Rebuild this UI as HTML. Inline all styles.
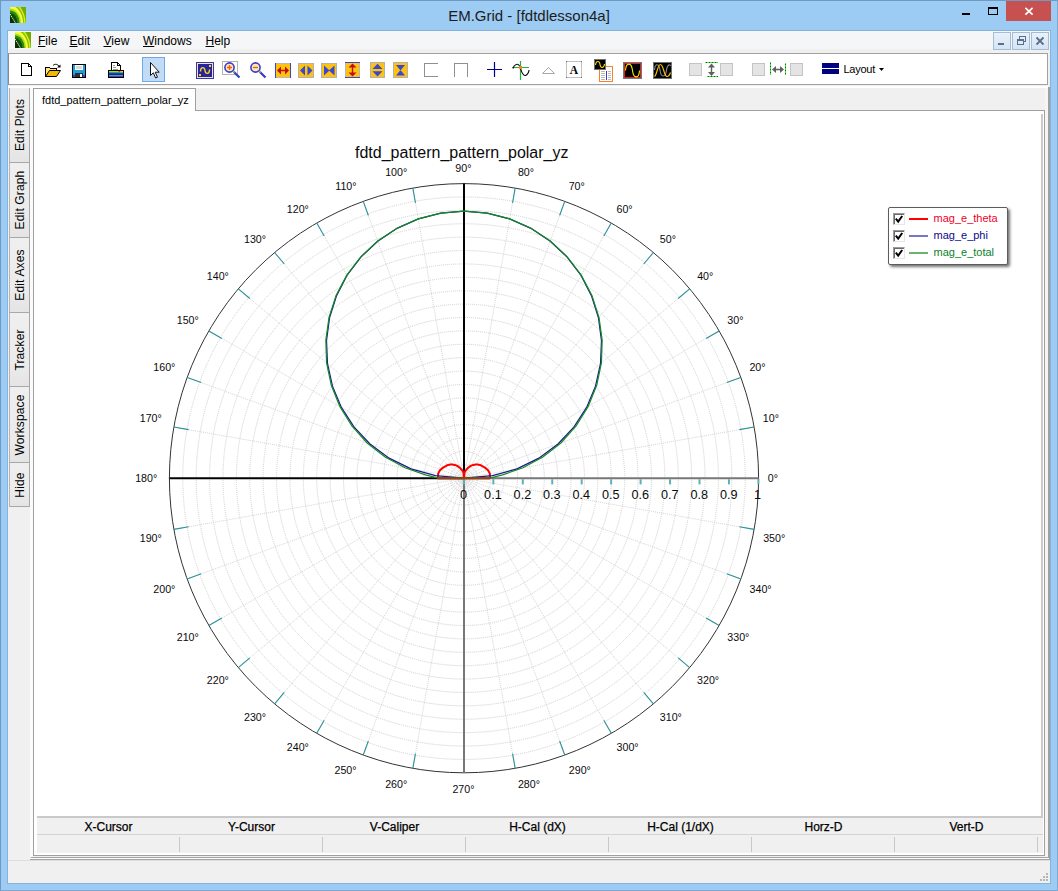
<!DOCTYPE html>
<html lang="en"><head><meta charset="utf-8"><title>EM.Grid - [fdtdlesson4a]</title>
<style>
html,body{margin:0;padding:0;}
body{width:1058px;height:891px;position:relative;overflow:hidden;background:#9ccbf3;font-family:"Liberation Sans",Arial,sans-serif;font-size:12px;color:#000;}
.abs{position:absolute;}
.frame{position:absolute;left:0;top:0;width:1058px;height:891px;box-sizing:border-box;border:1px solid #6f98c2;border-right-color:#7fa7cf;border-bottom-color:#7fa7cf;}
.inner{position:absolute;left:7px;top:30px;width:1044px;height:854px;box-sizing:border-box;border:1px solid #86b2dc;}
.title{position:absolute;left:0;top:5.500px;width:1058px;text-align:center;font-size:15px;line-height:20px;color:#1c1c1c;white-space:nowrap;}
.client{position:absolute;left:8px;top:31px;width:1042px;height:852px;background:#f0f0f0;overflow:hidden;}
.menubar{position:absolute;left:0;top:0;width:1042px;height:18px;background:#f5f6f7;}
.menubar span.m{position:absolute;top:2px;font-size:12px;line-height:16px;white-space:nowrap;}
.menubar u{text-decoration:underline;text-underline-offset:1px;}
.mdibtn{position:absolute;top:1px;width:18px;height:18px;box-sizing:border-box;border:1px solid #a6bbd4;background:linear-gradient(#e9f1fa,#d5e4f5);}
.toolbar{position:absolute;left:0;top:22px;width:1040px;height:32px;box-sizing:border-box;background:#fff;border:1px solid #a0a0a0;border-left-color:#8a8a8a;}
.sidetab{position:absolute;left:1px;width:21px;box-sizing:border-box;background:linear-gradient(#efefef,#ebebeb 70%,#e4e4e4);border-top:1px solid #a8a8a8;border-right:1px solid #a8a8a8;border-left:1px solid #b4b4b4;}
.sidetab span{position:absolute;left:50%;top:50%;transform:translate(-50%,-50%) rotate(-90deg);white-space:nowrap;font-size:12px;letter-spacing:0.140px;}
.page{position:absolute;left:25px;top:79px;width:1012px;height:746px;box-sizing:border-box;background:#fff;border:1px solid #a0a0a0;}
.tab{position:absolute;left:25px;top:57px;width:163px;height:23px;box-sizing:border-box;background:#fff;border:1px solid #a0a0a0;border-bottom:none;}
.tab span{position:absolute;left:8px;top:4px;font-size:11px;line-height:14px;white-space:nowrap;}
.stat{position:absolute;left:29px;top:785px;width:1006px;height:37px;background:#f0f0f0;}
.stat .top{position:absolute;left:0;top:0;width:100%;height:2px;background:#c9c9c9;}
.stat .mid{position:absolute;left:0;top:18px;width:100%;height:1px;background:#d4d4d4;}
.stat .h{position:absolute;top:4px;-webkit-text-stroke:0.250px #000;width:143px;text-align:center;font-size:12px;line-height:15px;}
.stat .v{position:absolute;top:21px;width:1px;height:15px;background:#c8c8c8;}
svg.plot{position:absolute;left:0;top:0;}
.legend{position:absolute;left:888px;top:207px;width:120px;height:58px;box-sizing:border-box;border:1.500px solid #5c5c5c;border-radius:2px;background:#fff;box-shadow:2px 2px 3px rgba(0,0,0,.55);}
.legend .cb{position:absolute;left:3.500px;width:12px;height:12px;box-sizing:border-box;border:1px solid #9a9a9a;border-right-color:#e6e6e6;border-bottom-color:#e6e6e6;background:#fff;box-shadow:inset 1px 1px 0 #6a6a6a;}
.legend .cb svg{position:absolute;left:0;top:0;}
.legend .ln{position:absolute;left:19.500px;width:19px;}
.legend .tx{position:absolute;left:44.500px;font-size:11px;line-height:13px;white-space:nowrap;}

</style></head>
<body>
<div class="frame"></div>
<div class="inner"></div>
<div class="title">EM.Grid - [fdtdlesson4a]</div>
<svg class="abs" style="left:10px;top:7px" width="16" height="16" viewBox="0 0 16 16"><use href="#logo"/></svg>
<div class="abs" style="left:962px;top:13px;width:8px;height:2px;background:#000"></div>
<div class="abs" style="left:988px;top:7px;width:10px;height:8px;box-sizing:border-box;border:1px solid #000;border-top-width:2px"></div>
<div class="abs" style="left:1006px;top:1px;width:45px;height:20px;background:#c75050"></div>
<svg class="abs" style="left:1024px;top:6px" width="10" height="10" viewBox="0 0 10 10"><path d="M1.400 1.900L8.600 8.700M8.600 1.900L1.400 8.700" stroke="#fff" stroke-width="1.700" fill="none"/></svg>
<div class="client">
 <div class="menubar">
  <svg class="abs" style="left:7px;top:1px" width="16" height="16" viewBox="0 0 16 16">
   <defs><g id="logo"><clipPath id="lc"><rect width="16" height="16"/></clipPath><g clip-path="url(#lc)">
    <rect width="16" height="16" fill="#74ac00"/>
    <ellipse cx="0" cy="16" rx="15.500" ry="21" fill="#d8f030"/>
    <ellipse cx="0" cy="16" rx="14.300" ry="19.500" fill="#8cc400"/>
    <ellipse cx="0" cy="16" rx="13" ry="17.500" fill="#f6ff48"/>
    <ellipse cx="0" cy="16" rx="11" ry="14.600" fill="#b4e000"/>
    <ellipse cx="0" cy="16" rx="9.600" ry="12.600" fill="#2a8a14"/>
    <ellipse cx="0" cy="16" rx="7.500" ry="10" fill="#0e4a08"/>
    <ellipse cx="0" cy="16" rx="4" ry="6" fill="#0a3004"/>
    <path d="M0 7L5.500 16" stroke="#f0f4e0" stroke-width="1" stroke-dasharray="1.500 1"/>
   </g></g></defs><use href="#logo"/></svg>
  <span class="m" style="left:30px"><u>F</u>ile</span>
  <span class="m" style="left:61.500px"><u>E</u>dit</span>
  <span class="m" style="left:95.500px"><u>V</u>iew</span>
  <span class="m" style="left:135px"><u>W</u>indows</span>
  <span class="m" style="left:197.500px"><u>H</u>elp</span>
  <div class="mdibtn" style="left:985px"></div>
  <div class="mdibtn" style="left:1004px"></div>
  <div class="mdibtn" style="left:1023px"></div>
 </div>
 <div class="toolbar"></div>
 <div class="sidetab" style="top:56px;height:75px"><span>Edit Plots</span></div>
 <div class="sidetab" style="top:131px;height:75px"><span>Edit Graph</span></div>
 <div class="sidetab" style="top:206px;height:75px"><span>Edit Axes</span></div>
 <div class="sidetab" style="top:281px;height:75px"><span>Tracker</span></div>
 <div class="sidetab" style="top:355px;height:76px"><span>Workspace</span></div>
 <div class="sidetab" style="top:431px;height:45px;border-bottom:1px solid #a8a8a8"><span>Hide</span></div>
 <div class="abs" style="left:0;top:55px;width:1040px;height:2px;background:#fff"></div>
 <div class="abs" style="left:22px;top:57px;width:3px;height:769px;background:#fbfbfb"></div>
 <div class="abs" style="left:1037px;top:57px;width:3px;height:769px;background:#f5f5f5"></div>
 <div class="abs" style="left:1040px;top:56px;width:2px;height:773px;background:#a0a0a0"></div>
 <div class="abs" style="left:23px;top:826px;width:1019px;height:1px;background:#a4a4a4"></div>
 <div class="abs" style="left:22px;top:827px;width:1019px;height:1px;background:#fbfbfb"></div>
 <div class="abs" style="left:22px;top:828px;width:1020px;height:1px;background:#a4a4a4"></div>
 <div class="abs" style="left:0;top:829px;width:1042px;height:1px;background:#dedede"></div>
 <div class="page"></div>
 <div class="abs" style="left:1033px;top:83px;width:2px;height:704px;background:#cbcbcb"></div>
 <div class="tab"><span>fdtd_pattern_pattern_polar_yz</span></div>
 <div class="stat"><div class="top"></div><div class="mid"></div>
  <div class="h" style="left:0">X-Cursor</div>
  <div class="h" style="left:143px">Y-Cursor</div>
  <div class="h" style="left:286px">V-Caliper</div>
  <div class="h" style="left:429px">H-Cal (dX)</div>
  <div class="h" style="left:572px">H-Cal (1/dX)</div>
  <div class="h" style="left:715px">Horz-D</div>
  <div class="h" style="left:858px">Vert-D</div>
  <div class="v" style="left:142px"></div><div class="v" style="left:285px"></div><div class="v" style="left:428px"></div><div class="v" style="left:571px"></div><div class="v" style="left:714px"></div><div class="v" style="left:857px"></div><div class="v" style="left:1000px"></div>
 </div>
</div>
<svg class="abs" style="left:1040px;top:873px" width="8" height="8" viewBox="0 0 8 8" shape-rendering="crispEdges"><g fill="#b6b6b6"><rect x="6" y="0" width="2" height="2"/><rect x="3" y="3" width="2" height="2"/><rect x="6" y="3" width="2" height="2"/><rect x="0" y="6" width="2" height="2"/><rect x="3" y="6" width="2" height="2"/><rect x="6" y="6" width="2" height="2"/></g></svg>
<svg class="abs" style="left:0;top:0" width="1058" height="120" viewBox="0 0 1058 120">
<!-- new -->
<g shape-rendering="crispEdges">
<path d="M21.5 63.5H28.5L31.5 66.5V75.5H21.5Z" fill="#fff" stroke="#000" stroke-width="1"/>
<path d="M28.5 63.5V66.5H31.5" fill="none" stroke="#000" stroke-width="1"/>
</g>
<!-- open -->
<g>
<path d="M45.5 76.5V67.5H49.5L50.5 68.5H56.5V71" fill="#ffe680" stroke="#000" stroke-width="1" shape-rendering="crispEdges"/>
<path d="M45.5 76.5L49.5 70.5H60.5L56.5 76.5Z" fill="#f5b800" stroke="#000" stroke-width="1"/>
<path d="M53 65.5C55 63.5 58 64 59.5 67" fill="none" stroke="#000" stroke-width="1"/>
<path d="M57 67.5H60.5V64.5Z" fill="#000"/>
</g>
<!-- save -->
<g shape-rendering="crispEdges">
<rect x="72.5" y="64.5" width="13" height="13" fill="#1ba1e2" stroke="#000"/>
<rect x="75" y="65" width="8" height="5" fill="#fff"/>
<rect x="76" y="66" width="6" height="3" fill="#d8d8d8"/>
<rect x="75" y="73" width="8" height="4" fill="#303030"/>
<rect x="80" y="74" width="2" height="3" fill="#fff"/>
<rect x="73" y="75" width="2" height="2" fill="#4040c0"/><rect x="83" y="75" width="2" height="2" fill="#4040c0"/>
</g>
<!-- print -->
<g shape-rendering="crispEdges">
<path d="M111.5 70.5V62.5H117.5L120.5 65.5V70.5" fill="#fff" stroke="#000"/>
<path d="M117.5 62.5V65.5H120.5" fill="none" stroke="#000"/>
<rect x="113" y="65" width="2" height="1" fill="#999"/><rect x="113" y="67" width="3" height="1" fill="#999"/><rect x="113" y="68.6" width="5" height="1" fill="#999"/>
<rect x="108.500" y="70.500" width="15" height="7" rx="1" fill="#16248c" stroke="#000"/>
</g>
<g><rect x="109" y="71" width="14" height="1.500" fill="#a4e400"/><rect x="118.500" y="71" width="2" height="1.500" fill="#e83820"/><rect x="120.500" y="71" width="2.500" height="1.500" fill="#ffd000"/>
<rect x="109" y="72.500" width="14" height="1" fill="#00b4e4"/>
<rect x="109" y="73.500" width="14" height="1.500" fill="#142a8c"/>
<rect x="109" y="75" width="14" height="1.400" fill="#6c8cc8"/>
</g>
<!-- select -->
<rect x="142.500" y="57.500" width="22" height="24" fill="#c2dcf8" stroke="#6fa8e6"/>
<path d="M150.500 62.500V75.500L153.300 72.800L155.600 78L157.500 77.200L155.200 72.200H159.200Z" fill="#fff" stroke="#111" stroke-width="1"/>
<!-- scope -->
<g shape-rendering="crispEdges">
<rect x="196.500" y="62.500" width="17" height="16" fill="#f5e6a8" stroke="#3434c8"/>
<rect x="198" y="64" width="14" height="13" fill="#26269c"/>
<rect x="209" y="65" width="2" height="2" fill="#ffd020"/><rect x="199" y="74" width="2" height="2" fill="#ffd020"/>
</g>
<path d="M200.500 71.500C200.500 66.500 204.500 66.500 205 70.500C205.500 74.500 209.500 74.500 209.500 69.500" fill="none" stroke="#ffd020" stroke-width="1.400"/>
<!-- zoom in -->
<rect x="222.500" y="61.500" width="15" height="13" fill="none" stroke="#b4b4b4" shape-rendering="crispEdges"/>
<path d="M233.500 71.500L239.500 77.500" stroke="#3a3ac4" stroke-width="2.200"/>
<path d="M233 71L234.500 72.500" stroke="#a8d820" stroke-width="1.600"/>
<circle cx="229.500" cy="67.500" r="4.600" fill="#f6eab8" stroke="#3c3cd0" stroke-width="1.600"/>
<path d="M227 67.500H232M229.500 65V70" stroke="#ff5a00" stroke-width="1.300" fill="none"/>
<!-- zoom out -->
<path d="M259.500 71.500L265.500 77.500" stroke="#3a3ac4" stroke-width="2.200"/>
<path d="M259 71L260.500 72.500" stroke="#a8d820" stroke-width="1.600"/>
<circle cx="255.500" cy="67.500" r="4.600" fill="#f6eab8" stroke="#3c3cd0" stroke-width="1.600"/>
<path d="M253 67.500H258" stroke="#ff5a00" stroke-width="1.300" fill="none"/>
<!-- D: horizontal red arrows -->
<g>
<rect x="275" y="63" width="16" height="15" fill="#ffc20e"/>
<rect x="275" y="63" width="16" height="1" fill="#b4b4c4"/><rect x="275" y="77" width="16" height="1" fill="#b4b4c4"/>
<rect x="275" y="63" width="1" height="15" fill="#3444dc"/><rect x="290" y="63" width="1" height="15" fill="#3444dc"/>
<path d="M277 70.500L281 66.500V69.800H285V66.500L289 70.500L285 74.500V71.200H281V74.500Z" fill="#c01010"/>
</g>
<!-- E -->
<g>
<rect x="298.500" y="63.500" width="15" height="14" fill="#ffc20e" stroke="#b0b0b8"/>
<path d="M300 70.500L305 65.500V75.500Z M312.500 70.500L307.500 65.500V75.500Z" fill="#3a48d0"/>
</g>
<!-- F -->
<g>
<rect x="321.500" y="63.500" width="15" height="14" fill="#ffc20e" stroke="#b0b0b8"/>
<path d="M324 65.500L329.500 70.500L324 75.500Z M334.500 65.500L329 70.500L334.500 75.500Z" fill="#3a48d0"/>
</g>
<!-- G vertical red -->
<g>
<rect x="345" y="62" width="15" height="16" fill="#ffc20e"/>
<rect x="345" y="62" width="1" height="16" fill="#b4b4c4"/><rect x="359" y="62" width="1" height="16" fill="#b4b4c4"/>
<rect x="345" y="62" width="15" height="1" fill="#3444dc"/><rect x="345" y="77" width="15" height="1" fill="#3444dc"/>
<path d="M352.500 63.500L356.500 67.500H353.200V72.500H356.500L352.500 76.500L348.500 72.500H351.800V67.500H348.500Z" fill="#c01010"/>
</g>
<!-- H -->
<g>
<rect x="370.500" y="62.500" width="14" height="15" fill="#ffc20e" stroke="#b0b0b8"/>
<path d="M377.500 63.800L382.500 69H372.500Z M377.500 76.400L382.500 71.200H372.500Z" fill="#3a48d0"/>
</g>
<!-- I -->
<g>
<rect x="393.500" y="62.500" width="14" height="15" fill="#ffc20e" stroke="#b0b0b8"/>
<path d="M396 65H405L400.500 70.500Z M396 75.500H405L400.500 70Z" fill="#3a48d0"/>
</g>
<!-- J K -->
<g shape-rendering="crispEdges" fill="none" stroke="#909090">
<path d="M438 63.500H424.500V76.500H438"/>
<path d="M454.500 77V63.500H467.500V77"/>
</g>
<!-- plus -->
<path d="M487 69.500H502M494.500 62V77" stroke="#00008c" stroke-width="1.200" fill="none"/>
<!-- tracker -->
<path d="M512 67.500H529M520.500 61V80" stroke="#22b14c" stroke-width="1.200" fill="none"/>
<path d="M513 68.500C514 65 517.500 62.500 519.500 66C521 69 522 76 525.500 75.500C527.500 75 529 72 529 70" stroke="#000" stroke-width="1.100" fill="none"/>
<rect x="519" y="66" width="3" height="3" fill="#ff7f27"/>
<!-- triangle -->
<path d="M548.500 67.500L542.500 73.500H554.500Z" fill="#fff" stroke="#a8a8a8" stroke-width="1"/>
<!-- A -->
<rect x="566.500" y="61.500" width="15" height="16" fill="#fff" stroke="#c0c0c0" shape-rendering="crispEdges"/>
<g fill="#707070"><rect x="566" y="61" width="1" height="1"/><rect x="581" y="61" width="1" height="1"/><rect x="566" y="77" width="1" height="1"/><rect x="581" y="77" width="1" height="1"/></g>
<text x="574" y="74" font-family="Liberation Serif, serif" font-weight="bold" font-size="11.500" text-anchor="middle" fill="#000">A</text>
<!-- scope+doc -->
<rect x="599.500" y="66.500" width="13" height="15" fill="#fff" stroke="#ff7f27" shape-rendering="crispEdges"/>
<g fill="#b8b8b8" shape-rendering="crispEdges"><rect x="601" y="71" width="4" height="1"/><rect x="601" y="73" width="4" height="1"/><rect x="601" y="75" width="4" height="1"/><rect x="601" y="77" width="4" height="1"/><rect x="601" y="79" width="4" height="1"/>
<rect x="608" y="71" width="3" height="1"/><rect x="608" y="73" width="3" height="1"/><rect x="608" y="75" width="3" height="1"/><rect x="608" y="77" width="3" height="1"/><rect x="608" y="79" width="3" height="1"/></g>
<rect x="606" y="71" width="1" height="9" fill="#3a3ad0"/>
<rect x="594.500" y="59.500" width="11" height="10" fill="#000" stroke="#707070" shape-rendering="crispEdges"/>
<path d="M595.500 65C596 60.500 599.500 60.500 600 64.500C600.500 68.500 604 68.500 604.500 64" fill="none" stroke="#ffd800" stroke-width="1.100"/>
<!-- red scope -->
<rect x="623.500" y="62.500" width="18" height="16" fill="#e02020" stroke="#707880" shape-rendering="crispEdges"/>
<rect x="625" y="64" width="15" height="13" fill="#000" shape-rendering="crispEdges"/>
<path d="M625.500 70.500C626 62 631.500 62 632.500 70.500C633.500 79 639 79 639.500 70.500" fill="none" stroke="#ffee00" stroke-width="1.100"/>
<!-- gray scope -->
<rect x="653.500" y="62.500" width="18" height="16" fill="#000" stroke="#707070" shape-rendering="crispEdges"/>
<path d="M654.500 70C655 63 659 63 660 70C661 78 665.500 78 666.500 70C667.500 64 670 64 670.500 66" fill="none" stroke="#8a8a8a" stroke-width="1.100"/>
<path d="M654.500 76.500C657 75 657.500 64.500 660.500 64.500C663.500 64.500 664 76.500 667 76.500C669 76.500 670 74 670.500 72.500" fill="none" stroke="#ffc000" stroke-width="1.150"/>
<!-- disabled set -->
<g shape-rendering="crispEdges" fill="#e4e4e4" stroke="#c4c4c4">
<rect x="689.500" y="63.500" width="12" height="12"/><rect x="720.500" y="63.500" width="12" height="12"/>
<rect x="752.500" y="63.500" width="12" height="12"/><rect x="790.500" y="63.500" width="12" height="12"/>
</g>
<path d="M705 62.500H718M707 76.500H718" stroke="#38e838" stroke-width="1" shape-rendering="crispEdges"/><path d="M706 62.500H718M708 76.500H718" stroke="#1c5c1c" stroke-width="1" stroke-dasharray="1 2" shape-rendering="crispEdges"/>
<path d="M711.500 63.500L715 67.500H712.200V72H715L711.500 76L708 72H710.800V67.500H708Z" fill="#606060"/>
<path d="M770.500 62V75M785.500 63V75" stroke="#38e838" stroke-width="1" shape-rendering="crispEdges"/><path d="M770.500 63V75M785.500 64V75" stroke="#1c5c1c" stroke-width="1" stroke-dasharray="1 2" shape-rendering="crispEdges"/>
<path d="M772 69.500L776 66V68.800H780V66L784 69.500L780 73V70.200H776V73Z" fill="#606060"/>
<!-- layout -->
<g shape-rendering="crispEdges" fill="#000080"><rect x="822" y="63" width="17" height="5"/><rect x="822" y="69" width="17" height="5"/></g>
<text x="843.500" y="72.500" font-family="Liberation Sans, Arial, sans-serif" font-size="11" letter-spacing="-0.250" fill="#000">Layout</text>
<path d="M879 68H884L881.500 71Z" fill="#000"/>
<!-- MDI buttons glyphs -->
<rect x="998" y="43" width="6" height="2" fill="#5a6f8c"/>
<g fill="none" stroke="#5a6f8c" stroke-width="1" shape-rendering="crispEdges"><path d="M1019.500 38.500V36.500H1025.500V41.500H1023.500"/><rect x="1017.500" y="39.500" width="6" height="5" fill="#dfeaf7"/><path d="M1017.500 40.500H1023.500"/></g>
<path d="M1036.500 37.500L1043.500 44.500M1043.500 37.500L1036.500 44.500" stroke="#5a6f8c" stroke-width="1.800" fill="none"/>
</svg>

<svg class="plot" width="1058" height="891" viewBox="0 0 1058 891">
<g fill="none" stroke="#cecece" stroke-width="1" stroke-dasharray="1 1">
<circle cx="464.00" cy="478.20" r="13.39"/>
<circle cx="464.00" cy="478.20" r="26.78"/>
<circle cx="464.00" cy="478.20" r="40.17"/>
<circle cx="464.00" cy="478.20" r="53.56"/>
<circle cx="464.00" cy="478.20" r="66.95"/>
<circle cx="464.00" cy="478.20" r="80.35"/>
<circle cx="464.00" cy="478.20" r="93.74"/>
<circle cx="464.00" cy="478.20" r="107.13"/>
<circle cx="464.00" cy="478.20" r="120.52"/>
<circle cx="464.00" cy="478.20" r="133.91"/>
<circle cx="464.00" cy="478.20" r="147.30"/>
<circle cx="464.00" cy="478.20" r="160.69"/>
<circle cx="464.00" cy="478.20" r="174.08"/>
<circle cx="464.00" cy="478.20" r="187.47"/>
<circle cx="464.00" cy="478.20" r="200.86"/>
<circle cx="464.00" cy="478.20" r="214.25"/>
<circle cx="464.00" cy="478.20" r="227.65"/>
<circle cx="464.00" cy="478.20" r="241.04"/>
<circle cx="464.00" cy="478.20" r="254.43"/>
<circle cx="464.00" cy="478.20" r="267.82"/>
<circle cx="464.00" cy="478.20" r="281.21"/>
<circle cx="464.00" cy="478.20" r="3.00"/>
<circle cx="464.00" cy="478.20" r="6.00"/>
<circle cx="464.00" cy="478.20" r="9.00"/>
</g>
<g fill="none" stroke="#d4d4d4" stroke-width="1" stroke-dasharray="1 1">
<line x1="464.00" y1="478.20" x2="754.12" y2="427.04"/>
<line x1="464.00" y1="478.20" x2="740.83" y2="377.44"/>
<line x1="464.00" y1="478.20" x2="719.13" y2="330.90"/>
<line x1="464.00" y1="478.20" x2="689.68" y2="288.83"/>
<line x1="464.00" y1="478.20" x2="653.37" y2="252.52"/>
<line x1="464.00" y1="478.20" x2="611.30" y2="223.07"/>
<line x1="464.00" y1="478.20" x2="564.76" y2="201.37"/>
<line x1="464.00" y1="478.20" x2="515.16" y2="188.08"/>
<line x1="464.00" y1="478.20" x2="412.84" y2="188.08"/>
<line x1="464.00" y1="478.20" x2="363.24" y2="201.37"/>
<line x1="464.00" y1="478.20" x2="316.70" y2="223.07"/>
<line x1="464.00" y1="478.20" x2="274.63" y2="252.52"/>
<line x1="464.00" y1="478.20" x2="238.32" y2="288.83"/>
<line x1="464.00" y1="478.20" x2="208.87" y2="330.90"/>
<line x1="464.00" y1="478.20" x2="187.17" y2="377.44"/>
<line x1="464.00" y1="478.20" x2="173.88" y2="427.04"/>
<line x1="464.00" y1="478.20" x2="173.88" y2="529.36"/>
<line x1="464.00" y1="478.20" x2="187.17" y2="578.96"/>
<line x1="464.00" y1="478.20" x2="208.87" y2="625.50"/>
<line x1="464.00" y1="478.20" x2="238.32" y2="667.57"/>
<line x1="464.00" y1="478.20" x2="274.63" y2="703.88"/>
<line x1="464.00" y1="478.20" x2="316.70" y2="733.33"/>
<line x1="464.00" y1="478.20" x2="363.24" y2="755.03"/>
<line x1="464.00" y1="478.20" x2="412.84" y2="768.32"/>
<line x1="464.00" y1="478.20" x2="515.16" y2="768.32"/>
<line x1="464.00" y1="478.20" x2="564.76" y2="755.03"/>
<line x1="464.00" y1="478.20" x2="611.30" y2="733.33"/>
<line x1="464.00" y1="478.20" x2="653.37" y2="703.88"/>
<line x1="464.00" y1="478.20" x2="689.68" y2="667.57"/>
<line x1="464.00" y1="478.20" x2="719.13" y2="625.50"/>
<line x1="464.00" y1="478.20" x2="740.83" y2="578.96"/>
<line x1="464.00" y1="478.20" x2="754.12" y2="529.36"/>
</g>
<circle cx="464.00" cy="478.20" r="294.60" fill="none" stroke="#333" stroke-width="1"/>
<g stroke="#2a9298" stroke-width="1.100">
<line x1="754.12" y1="427.04" x2="739.35" y2="429.65"/>
<line x1="740.83" y1="377.44" x2="726.74" y2="382.57"/>
<line x1="719.13" y1="330.90" x2="706.14" y2="338.40"/>
<line x1="689.68" y1="288.83" x2="678.19" y2="298.48"/>
<line x1="653.37" y1="252.52" x2="643.72" y2="264.01"/>
<line x1="611.30" y1="223.07" x2="603.80" y2="236.06"/>
<line x1="564.76" y1="201.37" x2="559.63" y2="215.46"/>
<line x1="515.16" y1="188.08" x2="512.55" y2="202.85"/>
<line x1="412.84" y1="188.08" x2="415.45" y2="202.85"/>
<line x1="363.24" y1="201.37" x2="368.37" y2="215.46"/>
<line x1="316.70" y1="223.07" x2="324.20" y2="236.06"/>
<line x1="274.63" y1="252.52" x2="284.28" y2="264.01"/>
<line x1="238.32" y1="288.83" x2="249.81" y2="298.48"/>
<line x1="208.87" y1="330.90" x2="221.86" y2="338.40"/>
<line x1="187.17" y1="377.44" x2="201.26" y2="382.57"/>
<line x1="173.88" y1="427.04" x2="188.65" y2="429.65"/>
<line x1="173.88" y1="529.36" x2="188.65" y2="526.75"/>
<line x1="187.17" y1="578.96" x2="201.26" y2="573.83"/>
<line x1="208.87" y1="625.50" x2="221.86" y2="618.00"/>
<line x1="238.32" y1="667.57" x2="249.81" y2="657.92"/>
<line x1="274.63" y1="703.88" x2="284.28" y2="692.39"/>
<line x1="316.70" y1="733.33" x2="324.20" y2="720.34"/>
<line x1="363.24" y1="755.03" x2="368.37" y2="740.94"/>
<line x1="412.84" y1="768.32" x2="415.45" y2="753.55"/>
<line x1="515.16" y1="768.32" x2="512.55" y2="753.55"/>
<line x1="564.76" y1="755.03" x2="559.63" y2="740.94"/>
<line x1="611.30" y1="733.33" x2="603.80" y2="720.34"/>
<line x1="653.37" y1="703.88" x2="643.72" y2="692.39"/>
<line x1="689.68" y1="667.57" x2="678.19" y2="657.92"/>
<line x1="719.13" y1="625.50" x2="706.14" y2="618.00"/>
<line x1="740.83" y1="578.96" x2="726.74" y2="573.83"/>
<line x1="754.12" y1="529.36" x2="739.35" y2="526.75"/>
</g>
<g stroke-width="2">
<line x1="464.00" y1="478.20" x2="758.60" y2="478.20" stroke="#777"/>
<line x1="464.00" y1="478.20" x2="464.00" y2="772.80" stroke="#777"/>
<line x1="169.40" y1="478.20" x2="464.00" y2="478.20" stroke="#000"/>
<line x1="464.00" y1="183.60" x2="464.00" y2="479.20" stroke="#000"/>
</g>
<g stroke="#5fb0b4" stroke-width="2">
<line x1="463.90" y1="479.20" x2="463.90" y2="484.40"/>
<line x1="493.35" y1="479.20" x2="493.35" y2="484.40"/>
<line x1="522.80" y1="479.20" x2="522.80" y2="484.40"/>
<line x1="552.25" y1="479.20" x2="552.25" y2="484.40"/>
<line x1="581.70" y1="479.20" x2="581.70" y2="484.40"/>
<line x1="611.15" y1="479.20" x2="611.15" y2="484.40"/>
<line x1="640.60" y1="479.20" x2="640.60" y2="484.40"/>
<line x1="670.05" y1="479.20" x2="670.05" y2="484.40"/>
<line x1="699.50" y1="479.20" x2="699.50" y2="484.40"/>
<line x1="728.95" y1="479.20" x2="728.95" y2="484.40"/>
<line x1="758.40" y1="479.20" x2="758.40" y2="484.40"/>
</g>
<polyline points="489.81,478.20 489.93,475.93 489.86,473.64 488.75,471.57 487.48,469.65 485.62,468.12 483.67,466.84 481.76,465.76 479.82,464.93 477.66,464.54 475.57,464.42 473.31,464.91 471.23,465.68 469.27,466.89 467.59,468.33 466.26,469.75 465.21,471.31 464.49,472.62 464.00,478.20 463.51,472.62 462.79,471.31 461.74,469.75 460.41,468.33 458.73,466.89 456.77,465.68 454.69,464.91 452.43,464.42 450.34,464.54 448.18,464.93 446.24,465.76 444.33,466.84 442.38,468.12 440.52,469.65 439.25,471.57 438.14,473.64 438.07,475.93 438.19,478.20 464.00,478.20 464.00,478.20 464.00,478.20 464.00,478.20 464.00,478.20 464.00,478.20 464.00,478.20 464.00,478.20 464.00,478.20 464.00,478.20 464.00,478.20 464.00,478.20 464.00,478.20 464.00,478.20 464.00,478.20 464.00,478.20 464.00,478.20 464.00,478.20 464.00,478.20 464.00,478.20 464.00,478.20 464.00,478.20 464.00,478.20 464.00,478.20 464.00,478.20 464.00,478.20 464.00,478.20 464.00,478.20 464.00,478.20 464.00,478.20 464.00,478.20 464.00,478.20 464.00,478.20 464.00,478.20 464.00,478.20 489.81,478.20" fill="none" stroke="#ff0000" stroke-width="2" stroke-linejoin="round"/>
<polyline points="464.00,478.20 492.52,475.70 516.98,468.86 538.87,458.14 558.00,443.99 574.02,426.89 586.62,407.41 595.51,386.12 600.49,363.67 601.48,340.72 598.47,317.94 591.58,295.99 581.03,275.51 567.12,257.07 550.26,241.21 530.94,228.37 509.71,218.94 487.19,213.17 464.00,211.22 440.81,213.17 418.29,218.94 397.06,228.37 377.74,241.21 360.88,257.07 346.97,275.51 336.42,295.99 329.53,317.94 326.52,340.72 327.51,363.67 332.49,386.12 341.38,407.41 353.98,426.89 370.00,443.99 389.13,458.14 411.02,468.86 435.48,475.70 464.00,478.20 464.00,478.20 464.00,478.20 464.00,478.20 464.00,478.20 464.00,478.20 464.00,478.20 464.00,478.20 464.00,478.20 464.00,478.20 464.00,478.20 464.00,478.20 464.00,478.20 464.00,478.20 464.00,478.20 464.00,478.20 464.00,478.20 464.00,478.20 464.00,478.20 464.00,478.20 464.00,478.20 464.00,478.20 464.00,478.20 464.00,478.20 464.00,478.20 464.00,478.20 464.00,478.20 464.00,478.20 464.00,478.20 464.00,478.20 464.00,478.20 464.00,478.20 464.00,478.20 464.00,478.20 464.00,478.20 464.00,478.20 464.00,478.20" fill="none" stroke="#1a1a8c" stroke-width="1.2"/>
<polyline points="489.81,478.20 502.55,474.83 522.95,467.80 542.85,457.07 560.89,442.94 576.13,425.91 588.19,406.50 596.70,385.28 601.41,362.90 602.16,340.04 598.97,317.35 591.92,295.51 581.25,275.12 567.25,256.78 550.33,241.00 530.98,228.23 509.73,218.85 487.19,213.11 464.00,211.22 440.81,213.11 418.27,218.85 397.02,228.23 377.67,241.00 360.75,256.78 346.75,275.12 336.08,295.51 329.03,317.35 325.84,340.04 326.59,362.90 331.30,385.28 339.81,406.50 351.87,425.91 367.11,442.94 385.15,457.07 405.05,467.80 425.45,474.83 438.19,478.20 464.00,478.20 464.00,478.20 464.00,478.20 464.00,478.20 464.00,478.20 464.00,478.20 464.00,478.20 464.00,478.20 464.00,478.20 464.00,478.20 464.00,478.20 464.00,478.20 464.00,478.20 464.00,478.20 464.00,478.20 464.00,478.20 464.00,478.20 464.00,478.20 464.00,478.20 464.00,478.20 464.00,478.20 464.00,478.20 464.00,478.20 464.00,478.20 464.00,478.20 464.00,478.20 464.00,478.20 464.00,478.20 464.00,478.20 464.00,478.20 464.00,478.20 464.00,478.20 464.00,478.20 464.00,478.20 464.00,478.20 489.81,478.20" fill="none" stroke="#128a22" stroke-width="1.2"/>
<line x1="438.2" y1="478.2" x2="489.8" y2="478.2" stroke="#8a4812" stroke-width="2"/>
<g font-family="Liberation Sans, Arial, sans-serif" font-size="10.67" fill="#0a0a0a">
<text x="767.8" y="481.8" text-anchor="start">0°</text>
<text x="762.8" y="422.3" text-anchor="start">10°</text>
<text x="749.4" y="371.1" text-anchor="start">20°</text>
<text x="727.3" y="323.6" text-anchor="start">30°</text>
<text x="697.2" y="280.1" text-anchor="start">40°</text>
<text x="659.8" y="243.0" text-anchor="start">50°</text>
<text x="616.5" y="212.7" text-anchor="start">60°</text>
<text x="568.7" y="190.0" text-anchor="start">70°</text>
<text x="517.9" y="176.2" text-anchor="start">80°</text>
<text x="463.4" y="171.5" text-anchor="middle">90°</text>
<text x="407.2" y="176.2" text-anchor="end">100°</text>
<text x="356.5" y="190.0" text-anchor="end">110°</text>
<text x="308.9" y="212.7" text-anchor="end">120°</text>
<text x="266.0" y="243.0" text-anchor="end">130°</text>
<text x="228.9" y="280.1" text-anchor="end">140°</text>
<text x="198.8" y="323.6" text-anchor="end">150°</text>
<text x="175.4" y="371.1" text-anchor="end">160°</text>
<text x="161.8" y="422.3" text-anchor="end">170°</text>
<text x="157.2" y="481.8" text-anchor="end">180°</text>
<text x="161.8" y="541.7" text-anchor="end">190°</text>
<text x="175.4" y="592.9" text-anchor="end">200°</text>
<text x="198.8" y="640.5" text-anchor="end">210°</text>
<text x="228.9" y="683.9" text-anchor="end">220°</text>
<text x="266.0" y="721.0" text-anchor="end">230°</text>
<text x="308.9" y="751.3" text-anchor="end">240°</text>
<text x="356.5" y="774.0" text-anchor="end">250°</text>
<text x="407.2" y="787.8" text-anchor="end">260°</text>
<text x="463.4" y="792.5" text-anchor="middle">270°</text>
<text x="517.9" y="787.8" text-anchor="start">280°</text>
<text x="568.8" y="774.0" text-anchor="start">290°</text>
<text x="616.6" y="751.3" text-anchor="start">300°</text>
<text x="659.8" y="721.0" text-anchor="start">310°</text>
<text x="697.1" y="683.9" text-anchor="start">320°</text>
<text x="727.3" y="640.5" text-anchor="start">330°</text>
<text x="749.6" y="592.9" text-anchor="start">340°</text>
<text x="763.2" y="541.7" text-anchor="start">350°</text>
</g>
<g font-family="Liberation Sans, Arial, sans-serif" font-size="12.67" fill="#0a0a0a" text-anchor="middle">
<text x="463.4" y="498.6">0</text>
<text x="492.9" y="498.6">0.1</text>
<text x="522.4" y="498.6">0.2</text>
<text x="551.8" y="498.6">0.3</text>
<text x="581.3" y="498.6">0.4</text>
<text x="610.8" y="498.6">0.5</text>
<text x="640.3" y="498.6">0.6</text>
<text x="669.8" y="498.6">0.7</text>
<text x="699.2" y="498.6">0.8</text>
<text x="728.7" y="498.6">0.9</text>
<text x="757.4" y="498.6">1</text>
</g>
<text x="355" y="157.7" font-family="Liberation Sans, Arial, sans-serif" font-size="16" fill="#0a0a0a">fdtd_pattern_pattern_polar_yz</text>
</svg>
<div class="legend">
 <div class="cb" style="top:4.700px"><svg width="10" height="10" viewBox="0 0 10 10"><path d="M1.800 4.600L4.200 7.600L8.200 2" fill="none" stroke="#000" stroke-width="2"/></svg></div><div class="ln" style="top:9.500px;height:2px;background:#ff0000"></div><div class="tx" style="top:3.700px;color:#f00028">mag_e_theta</div>
 <div class="cb" style="top:21.700px"><svg width="10" height="10" viewBox="0 0 10 10"><path d="M1.800 4.600L4.200 7.600L8.200 2" fill="none" stroke="#000" stroke-width="2"/></svg></div><div class="ln" style="top:27px;height:2px;background:#7878bc"></div><div class="tx" style="top:20.700px;color:#0a0a8c">mag_e_phi</div>
 <div class="cb" style="top:38.600px"><svg width="10" height="10" viewBox="0 0 10 10"><path d="M1.800 4.600L4.200 7.600L8.200 2" fill="none" stroke="#000" stroke-width="2"/></svg></div><div class="ln" style="top:44px;height:2px;background:#68b470"></div><div class="tx" style="top:37.700px;color:#0c7f2c">mag_e_total</div>
</div>

</body></html>
